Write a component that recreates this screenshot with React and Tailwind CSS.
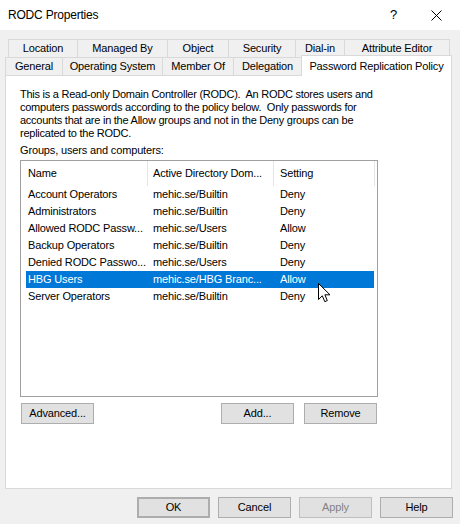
import React from "react";

const topTabs = [
  { label: "Location", w: "w-[69px]" },
  { label: "Managed By", w: "w-[90px]" },
  { label: "Object", w: "w-[61px]" },
  { label: "Security", w: "w-[67px]" },
  { label: "Dial-in", w: "w-[49px]" },
  { label: "Attribute Editor", w: "w-[106px] border-r" },
];

const bottomTabs = [
  { label: "General", w: "w-[57px]" },
  { label: "Operating System", w: "w-[100px]" },
  { label: "Member Of", w: "w-[71px]" },
  { label: "Delegation", w: "w-[68px]" },
];

const rows = [
  ["Account Operators", "mehic.se/Builtin", "Deny"],
  ["Administrators", "mehic.se/Builtin", "Deny"],
  ["Allowed RODC Passw...", "mehic.se/Users", "Allow"],
  ["Backup Operators", "mehic.se/Builtin", "Deny"],
  ["Denied RODC Passwo...", "mehic.se/Users", "Deny"],
  ["HBG Users", "mehic.se/HBG Branc...", "Allow", true],
  ["Server Operators", "mehic.se/Builtin", "Deny"],
];

const Button = ({ children, className = "" }) => (
  <div
    className={`w-[73px] h-[21px] flex items-center justify-center bg-[#e1e1e1] border border-[#adadad] ${className}`}
  >
    {children}
  </div>
);

const App = () => {
  return (
    <div className="w-[460px] h-[524px] bg-[#f0f0f0] flex flex-col overflow-hidden text-black font-['Liberation_Sans',Arial,sans-serif] text-[11px] tracking-[-0.15px]">
      {/* title bar */}
      <div className="h-[30px] shrink-0 bg-white flex items-center pl-[8px]">
        <span className="text-[12px] tracking-[-0.2px]">RODC Properties</span>
        <span className="ml-auto text-[13px] mr-[34px]">?</span>
        <svg width="11" height="11" viewBox="0 0 11 11" className="mr-[18px]">
          <path d="M0.5 0.5 L10.5 10.5 M10.5 0.5 L0.5 10.5" stroke="#000" strokeWidth="1" />
        </svg>
      </div>

      {/* tabs */}
      <div className="pt-[9px] pl-[8px] flex">
        {topTabs.map((t) => (
          <div
            key={t.label}
            className={`h-[18px] border-t border-l border-[#d9d9d9] flex items-center justify-center ${t.w}`}
          >
            {t.label}
          </div>
        ))}
      </div>
      <div className="pl-[5px] flex h-[18px] items-start">
        {bottomTabs.map((t) => (
          <div
            key={t.label}
            className={`h-[18px] border-t border-l border-[#d9d9d9] flex items-center justify-center ${t.w}`}
          >
            {t.label}
          </div>
        ))}
        <div className="relative z-10 -mt-[2px] h-[21px] w-[151px] bg-white border-t border-l border-r border-[#d9d9d9] flex items-start justify-center pt-[2px]">
          Password Replication Policy
        </div>
      </div>

      {/* page */}
      <div className="ml-[5px] w-[447px] h-[414px] shrink-0 bg-white border border-[#d9d9d9] pt-[12px] pl-[14px]">
        <div className="leading-[13px] whitespace-pre tracking-[-0.25px]">
          <div>This is a Read-only Domain Controller (RODC).  An RODC stores users and</div>
          <div>computers passwords according to the policy below.  Only passwords for</div>
          <div>accounts that are in the Allow groups and not in the Deny groups can be</div>
          <div>replicated to the RODC.</div>
        </div>
        <div className="mt-[4px] leading-[13px]">Groups, users and computers:</div>

        <div className="relative mt-[3px] w-[358px] h-[237px] border border-[#a0a0a0]">
          <div className="flex h-[25px]">
            <div className="w-[127px] pl-[7px] flex items-center border-r border-[#e5e5e5]">Name</div>
            <div className="w-[126px] pl-[5px] flex items-center border-r border-[#e5e5e5]">
              Active Directory Dom...
            </div>
            <div className="w-[101px] pl-[6px] flex items-center border-r border-[#e5e5e5]">Setting</div>
          </div>
          <div className="ml-[5px] w-[348px] flex flex-col">
            {rows.map(([name, dom, setting, sel]) => (
              <div
                key={name}
                className={`flex h-[17px] items-center ${sel ? "bg-[#0078d7] text-white" : ""}`}
              >
                <div className="w-[122px] pl-[2px] whitespace-nowrap">{name}</div>
                <div className="w-[126px] pl-[5px] whitespace-nowrap">{dom}</div>
                <div className="pl-[6px]">{setting}</div>
              </div>
            ))}
          </div>
          {/* mouse pointer */}
          <svg
            width="13"
            height="20"
            viewBox="0 0 13 20"
            className="absolute left-[297px] top-[122px]"
          >
            <path
              d="M0.5 0.5 L0.5 16.5 L4.3 12.8 L6.8 18.7 L9.3 17.6 L6.9 11.8 L12 11.8 Z"
              fill="#fff"
              stroke="#000"
              strokeWidth="1"
              strokeLinejoin="miter"
            />
          </svg>
        </div>

        <div className="mt-[6px] w-[358px] px-[1px] flex">
          <Button>Advanced...</Button>
          <Button className="ml-auto">Add...</Button>
          <Button className="ml-[10px]">Remove</Button>
        </div>
      </div>

      {/* dialog buttons */}
      <div className="mt-[8px] pr-[7px] flex justify-end gap-[8px]">
        <Button className="border-2 border-[#0078d7]">OK</Button>
        <Button>Cancel</Button>
        <Button className="bg-[#cccccc] border-[#bfbfbf] text-[#838383]">Apply</Button>
        <Button>Help</Button>
      </div>
    </div>
  );
};

export default App;
